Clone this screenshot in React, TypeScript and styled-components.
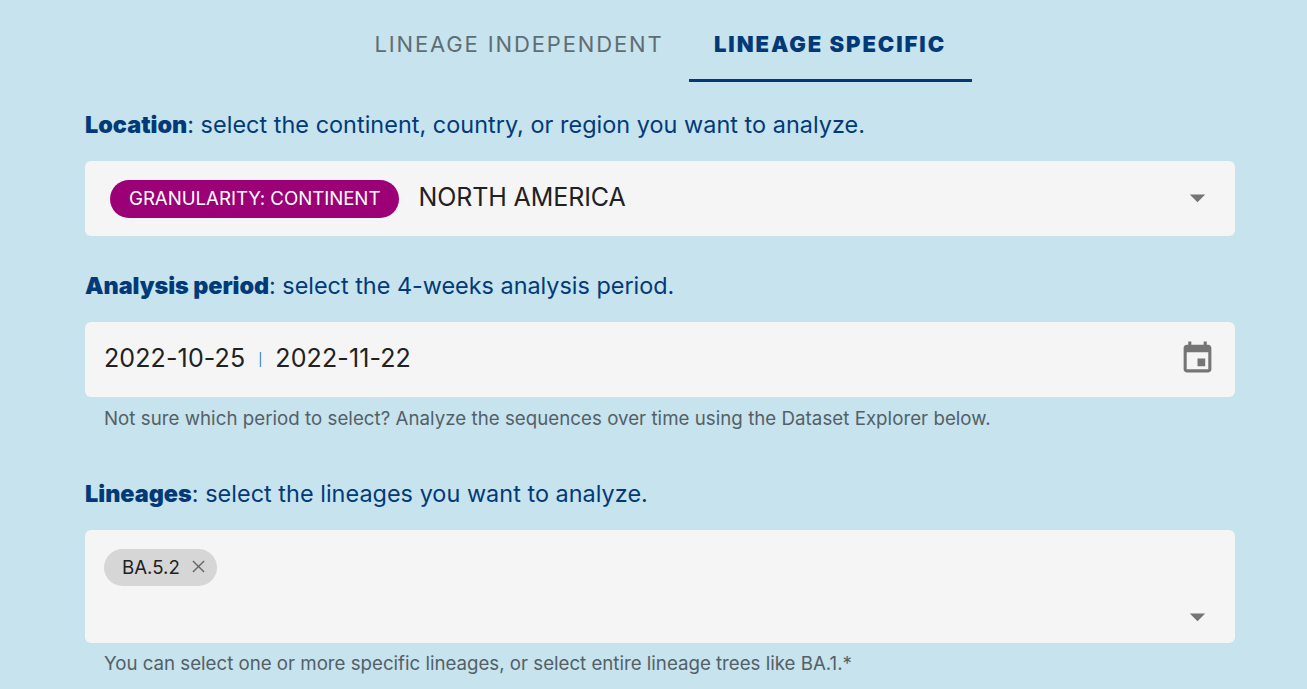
import React from "react";
import styled, { createGlobalStyle } from "styled-components";

const Global = createGlobalStyle`
  * { box-sizing: border-box; }
  body { margin: 0; background: #c7e3ee; font-family: Inter, sans-serif; overflow: hidden; }
`;
const Page = styled.main`
  height: 689px;
  padding: 0 72px 0 85px;
  overflow: hidden;
`;
const Tabs = styled.nav`
  display: flex;
  height: 82px;
  margin-left: 264px;
`;
const Tab = styled.button<{ $active?: boolean }>`
  width: ${(p) => (p.$active ? 283 : 340)}px;
  flex: none;
  border: 0;
  border-bottom: 3px solid ${(p) => (p.$active ? "#023a78" : "transparent")};
  background: none;
  padding: ${(p) => (p.$active ? "9px 1px 0 0" : "9px 0 0")};
  font: ${(p) => (p.$active ? 900 : 400)} 22px/30px Inter, sans-serif;
  letter-spacing: ${(p) => (p.$active ? 1.93 : 1.87)}px;
  color: ${(p) => (p.$active ? "#023a78" : "#5f6d74")};
  white-space: nowrap;
`;
const Field = styled.section<{ $top: number }>`
  padding-top: ${(p) => p.$top}px;
`;
const Label = styled.div<{ $tight?: boolean }>`
  height: 32px;
  margin-bottom: 20px;
  font-size: 23.4px;
  line-height: 31px;
  letter-spacing: ${(p) => (p.$tight ? 0 : 0.04)}px;
  color: #023a78;
  white-space: nowrap;
  b { font-weight: 900; letter-spacing: ${(p) => (p.$tight ? -0.07 : 0)}px; }
`;
const Box = styled.div<{ $tall?: boolean }>`
  height: ${(p) => (p.$tall ? 113 : 75)}px;
  display: flex;
  align-items: ${(p) => (p.$tall ? "stretch" : "center")};
  justify-content: space-between;
  border-radius: 6px;
  background: #f5f5f5;
  padding: ${(p) => (p.$tall ? "19px 19px 7px" : "0 19px")};
`;
const Value = styled.div`
  display: flex;
  align-items: center;
  font-size: 25px;
  line-height: 32px;
  color: #212121;
  white-space: nowrap;
`;
const Text = styled.span`
  padding-bottom: 3px;
  letter-spacing: -0.1px;
`;
const DateText = styled(Text)`
  letter-spacing: 0.12px;
`;
const Granularity = styled.span`
  height: 38px;
  margin: 0 19px 0 6px;
  padding: 0 19px;
  border-radius: 19px;
  background: #9c0077;
  color: #fff;
  font-size: 18.7px;
  letter-spacing: -0.05px;
  line-height: 38px;
`;
const Separator = styled.span`
  width: 30px;
  text-align: center;
  font-size: 12.5px;
  color: #1976a8;
`;
const Chip = styled.span`
  display: flex;
  align-items: center;
  width: 113px;
  height: 37px;
  padding-left: 18px;
  gap: 12px;
  border-radius: 19px;
  background: #d6d6d6;
  color: #212121;
  font-size: 18.7px;
`;
const Icon = styled.svg<{ $end?: boolean }>`
  flex: none;
  fill: #757575;
  align-self: ${(p) => (p.$end ? "flex-end" : "center")};
  margin-bottom: ${(p) => (p.$end ? 1 : 2)}px;
`;
const Hint = styled.div<{ $raised?: boolean }>`
  height: 26px;
  padding: ${(p) => (p.$raised ? 8 : 9)}px 19px 0;
  font-size: 18.7px;
  letter-spacing: ${(p) => (p.$raised ? -0.01 : 0.03)}px;
  line-height: 26px;
  color: #536066;
  white-space: nowrap;
`;
const Arrow = ({ end }: { end?: boolean }) => (
  <Icon $end={end} width="37" height="37" viewBox="0 0 24 24"><path d="M7 10l5 5 5-5z" /></Icon>
);

export default function App() {
  return (
    <Page>
      <Global />
      <Tabs>
        <Tab>LINEAGE INDEPENDENT</Tab>
        <Tab $active>LINEAGE SPECIFIC</Tab>
      </Tabs>
      <Field $top={27}>
        <Label><b>Location</b>: select the continent, country, or region you want to analyze.</Label>
        <Box><Value><Granularity>GRANULARITY: CONTINENT</Granularity><Text>NORTH AMERICA</Text></Value><Arrow /></Box>
      </Field>
      <Field $top={34}>
        <Label $tight><b>Analysis period</b>: select the 4-weeks analysis period.</Label>
        <Box>
          <Value><DateText>2022-10-25</DateText><Separator>|</Separator><DateText>2022-11-22</DateText></Value>
          <Icon width="37" height="37" viewBox="0 0 24 24"><path d="M17 12h-5v5h5v-5zM16 1v2H8V1H6v2H5c-1.11 0-1.99.9-1.99 2L3 19c0 1.1.89 2 2 2h14c1.1 0 2-.9 2-2V5c0-1.1-.9-2-2-2h-1V1h-2zm3 18H5V8h14v11z" /></Icon>
        </Box>
        <Hint>Not sure which period to select? Analyze the sequences over time using the Dataset Explorer below.</Hint>
      </Field>
      <Field $top={55}>
        <Label><b>Lineages</b>: select the lineages you want to analyze.</Label>
        <Box $tall>
          <Chip>BA.5.2<Icon width="13" height="13" viewBox="0 0 14 14"><path d="M1 1l12 12M13 1L1 13" stroke="#666" strokeWidth="1.5" /></Icon></Chip>
          <Arrow end />
        </Box>
        <Hint $raised>You can select one or more specific lineages, or select entire lineage trees like BA.1.*</Hint>
      </Field>
    </Page>
  );
}
